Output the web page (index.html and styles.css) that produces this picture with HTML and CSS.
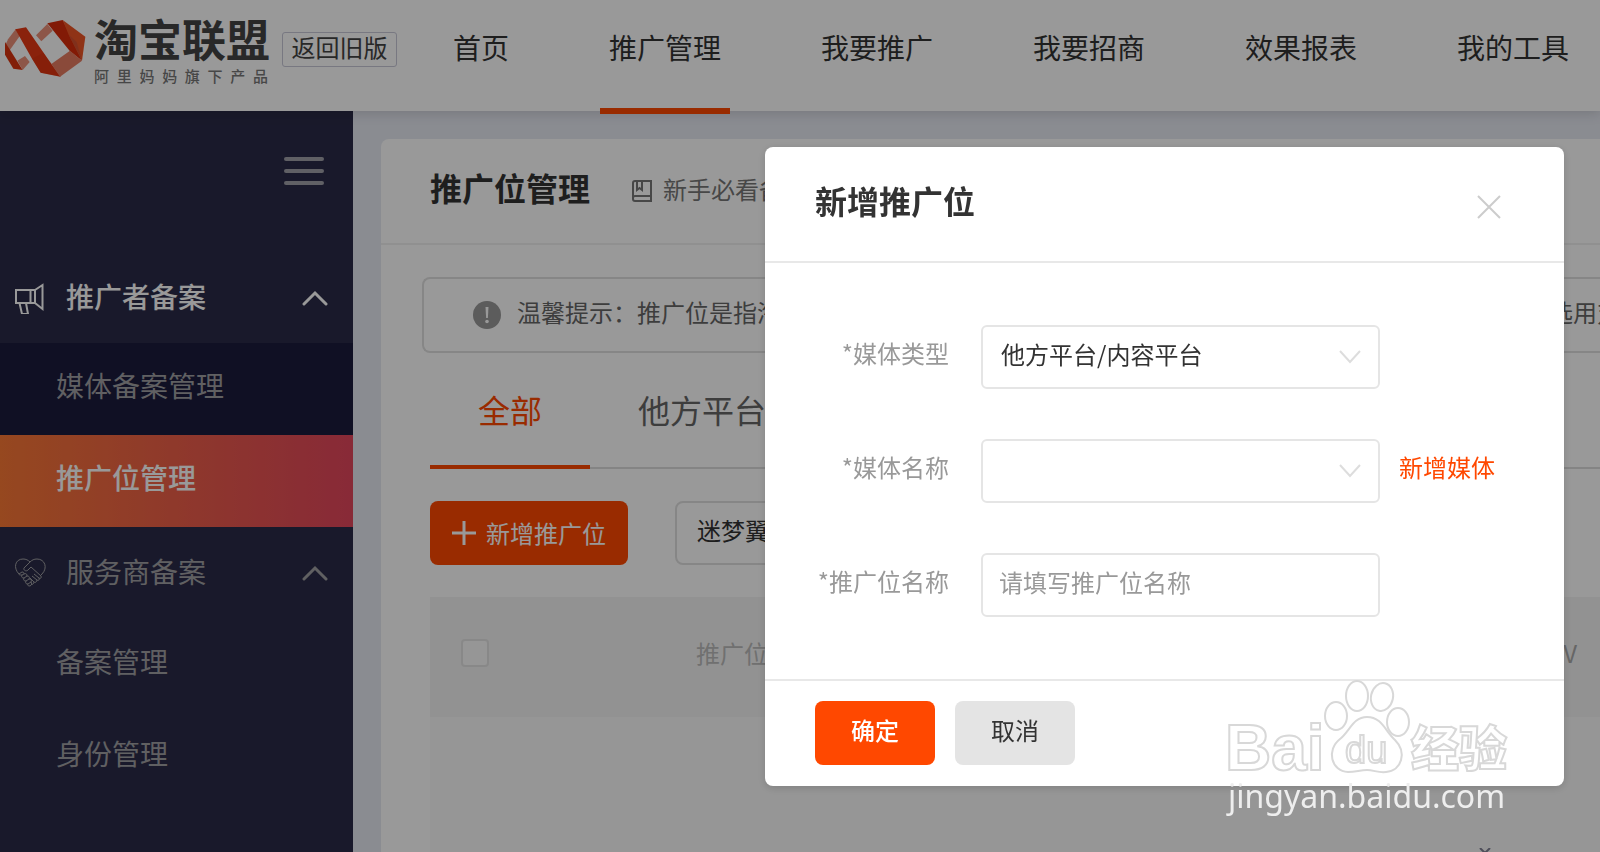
FILE: index.html
```html
<!DOCTYPE html>
<html lang="zh-CN">
<head>
<meta charset="utf-8">
<title>淘宝联盟 - 推广位管理</title>
<link rel="stylesheet" href="styles.css">
</head>
<body>
<div class="page">
  <header class="topbar">
    <a class="brand" href="#">
      <svg class="brand-mark" viewBox="12 30 246 180" aria-hidden="true">
        <path fill="#eb8f78" d="M48 56 24 88 15 108 28 122 62 74z"/>
        <path fill="#d9330e" d="M15 96 28 116 68 180 40 176 15 134z"/>
        <path fill="#eb8f78" d="M52 152 75 138 89 156 68 180z"/>
        <path fill="#e63a14" d="M46 58 78 52 150 156 182 200 122 188 96 146z"/>
        <path fill="#d12c0a" d="M96 146 130 128 150 156 182 200 122 188z" opacity=".35"/>
        <path fill="#eb8f78" d="M108 76 142 42 158 62 124 94z"/>
        <path fill="#d92c0a" d="M142 40 188 30 206 66 246 152 210 124z"/>
        <path fill="#ee5526" d="M188 30 256 80 246 152 206 74z"/>
        <path fill="#d6502f" d="M206 74 230 96 246 152z"/>
        <path fill="#e67c62" d="M154 162 210 122 246 152 180 200z"/>
      </svg>
      <span class="brand-text">
        <span class="brand-name">淘宝联盟</span>
        <span class="brand-sub">阿里妈妈旗下产品</span>
      </span>
    </a>
    <a class="back-old" href="#">返回旧版</a>
    <nav class="nav">
      <a href="#">首页</a>
      <a class="active" href="#">推广管理</a>
      <a href="#">我要推广</a>
      <a href="#">我要招商</a>
      <a href="#">效果报表</a>
      <a href="#">我的工具</a>
    </nav>
  </header>

  <div class="body">
    <aside class="sidebar">
      <button class="burger" type="button" aria-label="收起菜单"><i></i><i></i><i></i></button>
      <button class="group group-open" type="button">
        <svg class="group-icon" viewBox="0 0 32 32" aria-hidden="true"><path d="M2 8H21V21H2zM16.500 8V21M21 8 28.500 3V27L21 21M5.500 21 8 32H14L12 21"/></svg>
        <span>推广者备案</span>
        <svg class="caret" viewBox="0 0 26 16" aria-hidden="true"><path d="M2 14 13 3 24 14"/></svg>
      </button>
      <div class="submenu submenu-dark">
        <a href="#">媒体备案管理</a>
        <a class="active" href="#">推广位管理</a>
      </div>
      <button class="group" type="button">
        <svg class="group-icon thin" viewBox="0 0 32 32" aria-hidden="true"><path d="M5 17C-1 11 1 2 9 2c3 0 5 1 7 3 2-2 4-3 7-3 8 0 11 9 5 15l-1 1M16 5 10 11c-1 2 2 4 4 2l3-3L27 19c1 2-1 3-2 2l-5-4M25 21c1 2-1 3-2 2l-5-4M23 23c0 2-2 3-3 2l-4-4M20 25c0 2-2 3-3 2M5 17l3-2c2 0 2 1 2 2 2-1 3 0 3 2 2 0 3 1 2 3 2 0 3 1 2 3 1 1 1 3-1 4-2 0-3-1-2-2-2 0-3-1-2-3-2 0-3-1-2-3-2 0-3-1-2-3-2 0-3 0-3-1zM8 18l2-1M10 21l3-2M12 24l3-2M14 27l3-2"/></svg>
        <span>服务商备案</span>
        <svg class="caret" viewBox="0 0 26 16" aria-hidden="true"><path d="M2 14 13 3 24 14"/></svg>
      </button>
      <div class="submenu">
        <a href="#">备案管理</a>
        <a href="#">身份管理</a>
      </div>
    </aside>

    <main class="content">
      <section class="card">
        <div class="card-head">
          <h1>推广位管理</h1>
          <a class="guide" href="#">
            <svg viewBox="0 0 22 24" aria-hidden="true"><path d="M20 17V2H4Q2 2 2 4V20Q2 22 4 22H20V17H4Q2 17 2 19M6 2V11L8.500 9 11 11V2"/></svg>
            <span>新手必看备案</span>
          </a>
        </div>
        <div class="card-body">
          <div class="notice">
            <svg viewBox="0 0 28 28" aria-hidden="true"><circle cx="14" cy="14" r="14" fill="#999"/><path d="M12.500 6h3l-.6 11h-1.800z" fill="#fff"/><circle cx="14" cy="20.500" r="1.800" fill="#fff"/></svg>
            <span>温馨提示：推广位是指淘宝联盟推广者在备案媒体上投放的推广内容的具体位置，请按照媒体类型选用对</span>
          </div>
          <div class="tabs">
            <a class="active" href="#">全部</a>
            <a href="#">他方平台</a>
          </div>
          <div class="tools">
            <button class="add" type="button">
              <svg viewBox="0 0 24 24" aria-hidden="true"><path d="M12 0V24M0 12H24"/></svg>
              <span>新增推广位</span>
            </button>
            <select class="filter" aria-label="媒体"><option>迷梦翼</option></select>
          </div>
          <div class="list-wrap">
            <table class="list">
              <thead>
                <tr>
                  <th class="col-check"><input type="checkbox" aria-label="全选"></th>
                  <th>推广位</th>
                  <th class="col-pv">PV</th>
                </tr>
              </thead>
            </table>
            <svg class="more" viewBox="0 0 12 4" aria-hidden="true"><path d="M1 0 6 5 11 0"/></svg>
          </div>
        </div>
      </section>
    </main>
  </div>
</div>

<div class="overlay">
  <form class="dialog" role="dialog" aria-labelledby="dlg-title">
    <div class="dialog-head">
      <h2 id="dlg-title">新增推广位</h2>
      <button class="close" type="button" aria-label="关闭"><svg viewBox="0 0 24 24" aria-hidden="true"><path d="M1 1 23 23M23 1 1 23"/></svg></button>
    </div>
    <div class="dialog-body">
      <label for="type">*媒体类型</label>
      <div class="field">
        <select id="type"><option>他方平台/内容平台</option></select>
        <svg class="arrow" viewBox="0 0 24 16" aria-hidden="true"><path d="M2 2 12 13 22 2"/></svg>
      </div>
      <span></span>
      <label for="media">*媒体名称</label>
      <div class="field">
        <select id="media"><option></option></select>
        <svg class="arrow" viewBox="0 0 24 16" aria-hidden="true"><path d="M2 2 12 13 22 2"/></svg>
      </div>
      <a class="new-media" href="#">新增媒体</a>
      <label for="pos">*推广位名称</label>
      <div class="field"><input id="pos" type="text" placeholder="请填写推广位名称"></div>
    </div>
    <div class="dialog-foot">
      <button class="ok" type="button">确定</button>
      <button class="cancel" type="button">取消</button>
    </div>
  </form>
</div>

<div class="watermark">
  <svg viewBox="0 0 290 104" aria-hidden="true">
    <g class="wm-line">
      <text class="wm-latin" x="-3" y="98">Bai</text>
      <ellipse cx="108" cy="44" rx="11" ry="14"/>
      <ellipse cx="129" cy="24" rx="11" ry="15"/>
      <ellipse cx="154" cy="25" rx="11" ry="14" transform="rotate(12 154 25)"/>
      <ellipse cx="170" cy="50" rx="11" ry="14"/>
      <path d="M139 45c-14 0-17 14-27 22-14 11-9 32 8 33 8 0 12-2 19-2s11 3 19 2c16-1 21-20 9-32-10-9-13-23-28-23z"/>
      <text class="wm-du" x="117" y="91">du</text>
      <text class="wm-cn" x="183" y="94">经验</text>
    </g>
  </svg>
  <span>jingyan.baidu.com</span>
</div>
</body>
</html>
```

FILE: styles.css
```css
* { box-sizing: border-box; }
html, body { height: 100%; margin: 0; }
body {
  overflow: hidden;
  font-family: "Noto Sans CJK SC", "Noto Sans", sans-serif;
  font-size: 24px;
  line-height: 36px;
  color: #333;
}
a { color: inherit; text-decoration: none; }
button, input, select { font: inherit; color: inherit; }
button { border: 0; background: none; padding: 0; cursor: pointer; }
svg { display: block; flex: none; }

.page { height: 100%; display: flex; flex-direction: column; overflow: hidden; background: #e6e9f2; }

/* top bar */
.topbar {
  position: relative;
  z-index: 1;
  height: 111px;
  flex: none;
  display: flex;
  align-items: flex-start;
  background: #fff;
  box-shadow: 0 2px 12px rgba(0, 0, 0, .15);
}
.brand { display: flex; gap: 8px; padding: 16px 0 0 4px; width: 282px; }
.brand-mark { width: 82px; height: 60px; margin-top: 4px; }
.brand-text { display: flex; flex-direction: column; }
.brand-name { font-size: 44px; line-height: 44px; font-weight: 700; color: #444; }
.brand-sub { width: 174px; display: block; text-align-last: justify; font-size: 15px; line-height: 32px; color: #777; font-weight: 500; }
.back-old {
  margin-top: 32px;
  width: 115px;
  height: 35px;
  line-height: 28px;
  text-align: center;
  border: 1px solid #c8c9d8;
  border-radius: 3px;
  color: #444;
}
.nav { display: flex; gap: 82px; margin-left: 47px; }
.nav a { flex: none; height: 114px; padding: 27px 9px 0; font-size: 28px; line-height: 40px; }
.nav .active { border-bottom: 6px solid #ff4800; }

/* sidebar */
.body { flex: 1; display: flex; min-height: 0; }
.sidebar { width: 353px; flex: none; background: #2b2b48; color: #a0a0a4; font-size: 28px; }
.burger { display: flex; flex-direction: column; gap: 8px; margin: 46px 29px 68px auto; width: 40px; }
.burger i { height: 4px; border-radius: 2px; background: #a0a0a8; }
.group { display: flex; align-items: center; width: 100%; height: 92px; padding: 0 25px 0 14px; text-align: left; line-height: 40px; }
.group span { padding-bottom: 4px; }
.group-open { height: 90px; color: #fff; font-weight: 500; }
.group-icon { width: 32px; height: 32px; margin-right: 20px; fill: none; stroke: currentColor; stroke-width: 2; }
.thin { stroke-width: 1; }
.caret { width: 26px; height: 16px; margin-left: auto; fill: none; stroke: currentColor; stroke-width: 3; stroke-linecap: round; }
.submenu-dark { background: #1b1b3d; }
.submenu a { display: block; height: 92px; padding: 22px 0 0 56px; line-height: 40px; }
.submenu .active { color: #fff; font-weight: 500; background: linear-gradient(90deg, #fa7835, #e3465d); }

/* content */
.content { flex: 1; min-width: 0; padding: 28px 0 0 28px; }
.card { height: 100%; display: flex; flex-direction: column; overflow: hidden; background: #fff; border-radius: 8px 0 0 0; }
.card-head { flex: none; display: flex; align-items: center; gap: 41px; height: 106px; padding: 0 0 8px 49px; border-bottom: 2px solid #f0f0f0; white-space: nowrap; }
h1, h2 { margin: 0; font-size: 32px; line-height: 48px; font-weight: 700; }
.guide { display: flex; align-items: center; gap: 10px; padding-top: 4px; color: #777; }
.guide svg { width: 22px; height: 24px; margin-top: 4px; fill: none; stroke: currentColor; stroke-width: 2; }
.card-body { flex: 1; display: flex; flex-direction: column; min-height: 0; padding: 32px 0 0 49px; }
.notice {
  flex: none;
  display: flex; align-items: center; gap: 16px;
  height: 76px; margin-left: -8px; padding-left: 49px;
  border: 2px solid #e0e0e0; border-right: 0; border-radius: 8px 0 0 8px;
  white-space: nowrap; overflow: hidden; color: #666;
}
.notice svg { width: 28px; height: 28px; }
.notice span { padding-bottom: 6px; }
.tabs { flex: none; display: flex; height: 116px; font-size: 32px; line-height: 48px; color: #666; box-shadow: inset 0 -2px #ddd; }
.tabs a { padding: 32px 48px 0; }
.tabs .active { color: #ff4800; border-bottom: 4px solid #ff4800; }
.tools { flex: none; display: flex; gap: 47px; padding: 32px 0; }
.add { display: flex; align-items: center; gap: 10px; height: 64px; padding: 0 22px; border-radius: 8px; background: #ff4800; color: #fff; }
.add svg { width: 24px; height: 24px; stroke: currentColor; stroke-width: 3; }
.filter { appearance: none; width: 240px; height: 64px; padding: 0 20px 6px; border: 2px solid #e0e0e0; border-radius: 8px; background: #fff; }
.list-wrap { flex: 1; display: flex; flex-direction: column; justify-content: space-between; background: #fafafa; }
.list { width: 100%; border-collapse: collapse; table-layout: fixed; }
.list th { height: 120px; padding: 0 0 8px; background: #f4f4f4; color: #bbb; font-weight: 400; text-align: left; }
.col-check { width: 266px; }
.list .col-check { padding-left: 31px; }
.list .col-pv { width: 52px; color: #aaa; }
.col-check input { appearance: none; display: block; margin: 0; width: 28px; height: 28px; border: 2px solid #e3e3e3; border-radius: 4px; background: #fafafa; }
.more { align-self: flex-end; width: 12px; height: 4px; margin-right: 109px; fill: none; stroke: #808095; stroke-width: 2; }

/* dialog */
.overlay { position: fixed; inset: 0; z-index: 2; display: flex; justify-content: flex-end; align-items: flex-start; padding: 147px 36px 0; background: rgba(0, 0, 0, .4); }
.dialog { width: 799px; background: #fff; border-radius: 8px; box-shadow: 0 2px 8px rgba(0, 0, 0, .15); }
.dialog-head { display: flex; justify-content: space-between; align-items: center; height: 116px; padding: 0 63px 8px 50px; border-bottom: 2px solid #e8e8e8; }
.close { padding-top: 14px; }
.close svg { width: 24px; height: 24px; stroke: #ccc; stroke-width: 2; }
.dialog-body { display: grid; grid-template-columns: 184px 399px 1fr; row-gap: 50px; padding: 62px 0; }
.dialog-body label { padding-top: 10px; text-align: right; color: #999; }
.dialog-body .field { position: relative; margin-left: 32px; width: 399px; }
.dialog-body select, .dialog-body input { appearance: none; display: block; width: 100%; height: 64px; padding: 0 18px 6px; border: 2px solid #e5e5e5; border-radius: 6px; background: #fff; }
.dialog-body input { padding: 0 16px 8px; }
.dialog-body input::placeholder { color: #999; opacity: 1; }
.arrow { position: absolute; right: 18px; top: 24px; width: 24px; height: 16px; fill: none; stroke: #ddd; stroke-width: 2; pointer-events: none; }
.new-media { padding: 10px 0 0 51px; color: #ff4800; }
.dialog-foot { display: flex; gap: 20px; padding: 20px 50px 21px; border-top: 2px solid #e8e8e8; }
.dialog-foot button { width: 120px; height: 64px; padding-bottom: 6px; border-radius: 8px; }
.ok { background: #ff4800; color: #fff; font-weight: 500; }
.cancel { background: #e4e4e4; }

/* watermark */
.watermark { position: fixed; z-index: 3; right: 82px; bottom: 36px; width: 290px; font-family: "Noto Sans", sans-serif; color: #eee; pointer-events: none; }
.watermark svg { width: 290px; height: 104px; overflow: visible; }
.watermark span { display: block; font-size: 32px; line-height: 40px; }
.wm-line { fill: #fff; stroke: #d8d8d8; stroke-width: 2; }
.wm-latin { font: 700 64px "Liberation Sans", sans-serif; }
.wm-du { font: 400 38px "Liberation Sans", sans-serif; }
.wm-cn { font: 900 48px "Noto Sans CJK SC", sans-serif; }
```
